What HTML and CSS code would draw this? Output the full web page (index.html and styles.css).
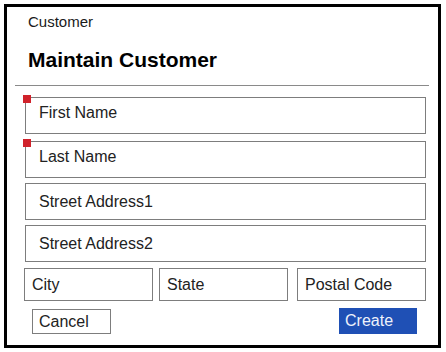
FILE: index.html
```html
<!DOCTYPE html>
<html lang="en">
<head>
    <meta charset="UTF-8">
    <title>Maintain Customer</title>
    <link rel="stylesheet" href="styles.css">
</head>
<body>
    <div class="frame">
        <div class="crumb">Customer</div>
        <h1 class="title">Maintain Customer</h1>
        <div class="rule"></div>

        <div class="field required first">First Name</div>
        <div class="field required second">Last Name</div>
        <div class="field third">Street Address1</div>
        <div class="field fourth">Street Address2</div>

        <div class="row">
            <div class="cell city">City</div>
            <div class="cell state">State</div>
            <div class="cell postal">Postal Code</div>
        </div>

        <div class="actions">
            <div class="btn cancel">Cancel</div>
            <div class="btn create">Create</div>
        </div>
    </div>
</body>
</html>
```

FILE: styles.css
```css
body {
    margin: 0;
    padding: 0;
    background-color: #fff;
    font-family: "Liberation Sans", Arial, sans-serif;
    color: #1a1a1a;
}
.frame {
    box-sizing: border-box;
    width: 437px;
    height: 344px;
    margin: 4px 0 0 4px;
    border: 3px solid #000;
    padding-top: 6px;
}
.crumb {
    font-size: 15px;
    line-height: 18px;
    padding-left: 21px;
}
.title {
    margin: 17px 0 0 0;
    padding-left: 21px;
    font-size: 21px;
    line-height: 24px;
    font-weight: bold;
    color: #000;
}
.rule {
    height: 1px;
    background-color: #8a8a8a;
    margin: 13px 9px 0 8px;
}
.field {
    position: relative;
    box-sizing: border-box;
    height: 37px;
    margin: 0 12px 0 18px;
    border: 1px solid #7d7d7d;
    padding-left: 13px;
    font-size: 16px;
    display: flex;
    align-items: center;
    color: #222;
}
.field.required {
    padding-bottom: 5px;
}
.field.required::before {
    content: "";
    position: absolute;
    left: -3px;
    top: -3px;
    width: 8px;
    height: 8px;
    background-color: #d0222b;
}
.first {
    margin-top: 11px;
}
.second {
    margin-top: 7px;
}
.third {
    margin-top: 5px;
}
.fourth {
    margin-top: 5px;
}
.row {
    display: flex;
    margin: 6px 12px 0 17px;
}
.cell {
    box-sizing: border-box;
    width: 129px;
    height: 33px;
    border: 1px solid #7d7d7d;
    padding-left: 7px;
    font-size: 16px;
    display: flex;
    align-items: center;
    color: #222;
}
.state {
    margin-left: 6px;
}
.postal {
    margin-left: 9px;
}
.actions {
    display: flex;
    justify-content: space-between;
    align-items: flex-start;
    padding: 0 21px 0 25px;
    margin-top: 8px;
}
.btn {
    box-sizing: border-box;
    font-size: 16px;
    display: flex;
    align-items: center;
    padding-left: 6px;
}
.cancel {
    width: 79px;
    height: 25px;
    border: 1px solid #7d7d7d;
    color: #222;
}
.create {
    width: 78px;
    height: 26px;
    margin-top: -1px;
    background-color: #1f50b5;
    color: #eef2fb;
}
```
